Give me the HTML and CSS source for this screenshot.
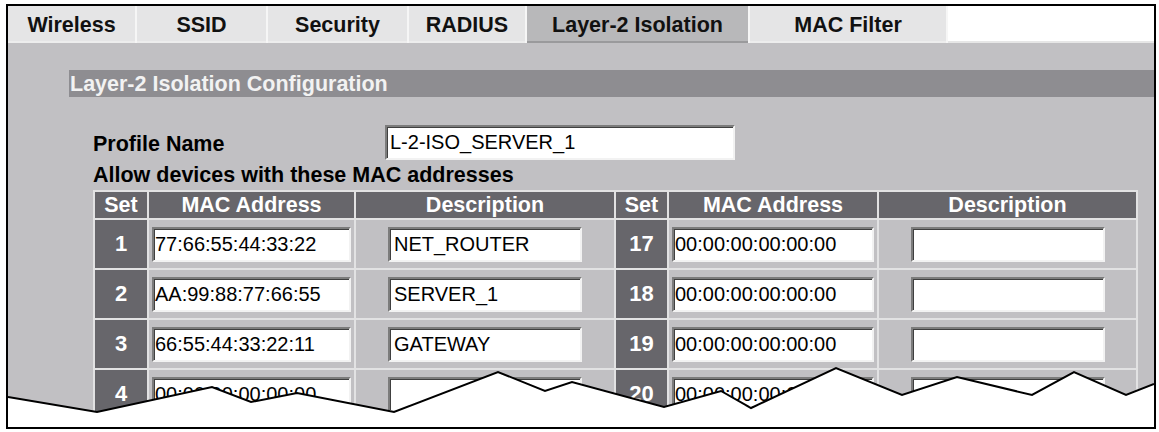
FILE: index.html
```html
<!DOCTYPE html>
<html lang="en">
<head>
<meta charset="utf-8">
<title>Layer-2 Isolation</title>
<link rel="stylesheet" href="styles.css">
</head>
<body>
<div class="frame">
  <div class="tabs">
    <div class="tab t-wireless">Wireless</div>
    <div class="tab t-ssid">SSID</div>
    <div class="tab t-security">Security</div>
    <div class="tab t-radius">RADIUS</div>
    <div class="tab t-l2 selected">Layer-2 Isolation</div>
    <div class="tab t-mac">MAC Filter</div>
    <div class="tab-fill"></div>
  </div>
  <div class="content">
    <div class="section-title">Layer-2 Isolation Configuration</div>
    <div class="profile-row">
      <span class="label">Profile Name</span>
      <input class="field profile" type="text" value="L-2-ISO_SERVER_1">
    </div>
    <div class="allow">Allow devices with these MAC addresses</div>
    <table class="mac-table">
      <colgroup>
        <col class="c-set1"><col class="c-mac1"><col class="c-desc1">
        <col class="c-set2"><col class="c-mac2"><col class="c-desc2">
      </colgroup>
      <thead>
        <tr><th>Set</th><th>MAC Address</th><th>Description</th><th>Set</th><th>MAC Address</th><th>Description</th></tr>
      </thead>
      <tbody>
        <tr>
          <td class="set">1</td>
          <td class="mac"><input class="field mac-in" type="text" value="77:66:55:44:33:22"></td>
          <td class="desc"><input class="field desc-in" type="text" value="NET_ROUTER"></td>
          <td class="set">17</td>
          <td class="mac"><input class="field mac-in" type="text" value="00:00:00:00:00:00"></td>
          <td class="desc"><input class="field desc-in" type="text" value=""></td>
        </tr>
        <tr>
          <td class="set">2</td>
          <td class="mac"><input class="field mac-in" type="text" value="AA:99:88:77:66:55"></td>
          <td class="desc"><input class="field desc-in" type="text" value="SERVER_1"></td>
          <td class="set">18</td>
          <td class="mac"><input class="field mac-in" type="text" value="00:00:00:00:00:00"></td>
          <td class="desc"><input class="field desc-in" type="text" value=""></td>
        </tr>
        <tr>
          <td class="set">3</td>
          <td class="mac"><input class="field mac-in" type="text" value="66:55:44:33:22:11"></td>
          <td class="desc"><input class="field desc-in" type="text" value="GATEWAY"></td>
          <td class="set">19</td>
          <td class="mac"><input class="field mac-in" type="text" value="00:00:00:00:00:00"></td>
          <td class="desc"><input class="field desc-in" type="text" value=""></td>
        </tr>
        <tr>
          <td class="set">4</td>
          <td class="mac"><input class="field mac-in" type="text" value="00:00:00:00:00:00"></td>
          <td class="desc"><input class="field desc-in" type="text" value=""></td>
          <td class="set">20</td>
          <td class="mac"><input class="field mac-in" type="text" value="00:00:00:00:00:00"></td>
          <td class="desc"><input class="field desc-in" type="text" value=""></td>
        </tr>
      </tbody>
    </table>
  </div>
  <svg class="tear" viewBox="0 0 1146 421" aria-hidden="true">
    <polygon class="tear-fill" points="0,391 89,406 204,381 243,396 289,387 386,406 490,366 537,385 564,376 656,401 713,385 743,402 828,362 894,389 949,371 1024,389 1066,366 1118,389 1146,378 1146,421 0,421"/>
    <polyline class="tear-line" points="0,391 89,406 204,381 243,396 289,387 386,406 490,366 537,385 564,376 656,401 713,385 743,402 828,362 894,389 949,371 1024,389 1066,366 1118,389 1146,378"/>
  </svg>
</div>
</body>
</html>
```

FILE: styles.css
```css
* {
  box-sizing: border-box;
}

body {
  margin: 0;
  background: #ffffff;
  font-family: "Liberation Sans", Arial, sans-serif;
}

.frame {
  position: relative;
  margin: 4px 0 0 6px;
  width: 1150px;
  height: 425px;
  border: 2px solid #000000;
  background: #c1c0c3;
  overflow: hidden;
}

/* ---------- tabs ---------- */
.tabs {
  display: flex;
  gap: 2px;
  height: 37px;
  background: #f6f6f6;
}

.tab {
  height: 37px;
  padding-top: 3px;
  display: flex;
  align-items: center;
  justify-content: center;
  background: #e5e5e6;
  border-bottom: 2px solid #ededed;
  font-size: 21.5px;
  font-weight: bold;
  color: #111111;
  white-space: nowrap;
}

.tab.selected {
  background: #b8b8ba;
  border-bottom-color: #9a9a9c;
}

.t-wireless { width: 127px; }
.t-ssid { width: 129px; }
.t-security { width: 139px; }
.t-radius { width: 116px; }
.t-l2 { width: 221px; }
.t-mac { width: 196px; }

.tab-fill {
  flex: 1;
  background: #ffffff;
  border-bottom: 2px solid #e6e6e6;
}

/* ---------- content ---------- */
.content {
  padding-top: 27px;
}

.section-title {
  margin-left: 61px;
  height: 27px;
  line-height: 28px;
  padding-left: 1px;
  background: #8e8d91;
  color: #f2f2f2;
  font-size: 21.5px;
  font-weight: bold;
  white-space: nowrap;
}

.profile-row {
  display: flex;
  align-items: center;
  height: 35px;
  margin: 28px 0 0 85px;
}

.label {
  width: 292px;
  padding-top: 3px;
  font-size: 21.5px;
  font-weight: bold;
  color: #000000;
}

.field {
  display: block;
  height: 35px;
  margin: 0;
  padding: 0 3px;
  border: 2px solid;
  border-color: #7c7c7c #f2f2f2 #f2f2f2 #7c7c7c;
  box-shadow: inset 1px 1px 0 #404040;
  background: #ffffff;
  color: #000000;
  font-family: "Liberation Sans", Arial, sans-serif;
  font-size: 20px;
  outline: none;
}

.profile {
  width: 350px;
}

.allow {
  margin: 3px 0 0 85px;
  line-height: 24px;
  font-size: 21.5px;
  font-weight: bold;
  color: #000000;
  white-space: nowrap;
}

/* ---------- table ---------- */
.mac-table {
  margin: 3px 0 0 85px;
  width: 1045px;
  table-layout: fixed;
  border-spacing: 2px;
  background: #e2e2e3;
}

.c-set1 { width: 52px; }
.c-mac1 { width: 205px; }
.c-desc1 { width: 258px; }
.c-set2 { width: 51px; }
.c-mac2 { width: 208px; }
.c-desc2 { width: 257px; }

.mac-table th {
  height: 26px;
  padding: 0;
  background: #67666b;
  color: #ffffff;
  font-size: 21.5px;
  font-weight: bold;
  line-height: 26px;
  text-align: center;
  white-space: nowrap;
}

.mac-table td {
  height: 48px;
  padding: 0;
  background: #c1c0c3;
  vertical-align: middle;
}

.mac-table td.set {
  background: #67666b;
  color: #ffffff;
  font-size: 22px;
  font-weight: bold;
  text-align: center;
}

.mac-table td.mac {
  padding: 0 3px;
}

.mac-in {
  width: 100%;
  padding-left: 1px;
}

.desc-in {
  width: 194px;
  margin: 0 auto;
  padding-left: 4px;
}

/* ---------- torn-paper edge ---------- */
.tear {
  position: absolute;
  left: 0;
  top: 0;
  width: 1146px;
  height: 421px;
}

.tear-fill {
  fill: #ffffff;
  stroke: none;
}

.tear-line {
  fill: none;
  stroke: #000000;
  stroke-width: 2;
  stroke-linejoin: miter;
}
```
